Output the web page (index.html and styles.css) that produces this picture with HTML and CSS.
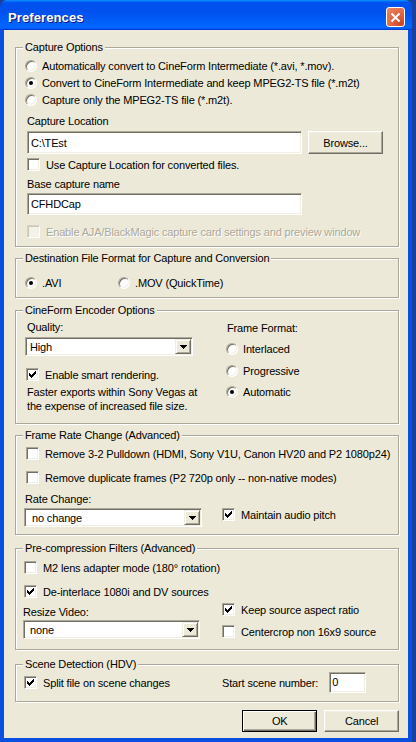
FILE: index.html
```html
<!DOCTYPE html>
<html>
<head>
<meta charset="utf-8">
<title>Preferences</title>
<link rel="stylesheet" href="styles.css">
</head>
<body>
<svg class="sprite" width="0" height="0">
  <symbol id="chk" viewBox="0 0 7 7"><path d="M6 0h1v1h-1z M5 1h2v1h-2z M0 2h1v1h-1z M4 2h3v1h-3z M0 3h2v1h-2z M3 3h3v1h-3z M0 4h5v1h-5z M1 5h3v1h-3z M2 6h1v1h-1z"/></symbol>
  <symbol id="down" viewBox="0 0 7 4"><path d="M0 0h7v1h-7z M1 1h5v1h-5z M2 2h3v1h-3z M3 3h1v1h-1z"/></symbol>
</svg>
<div class="window">
  <div class="titlebar">
    <span class="title">Preferences</span>
    <span class="close"><svg width="11" height="11" viewBox="0 0 11 11"><path d="M1.5 1.5l8 8M9.5 1.5l-8 8" stroke="#fff" stroke-width="2"/></svg></span>
  </div>
  <div class="frame">
    <div class="client">

      <section class="group g-capture">
        <div class="legend">Capture Options</div>
        <div class="row mt3 ml1"><span class="radio"></span>Automatically convert to CineForm Intermediate (*.avi, *.mov).</div>
        <div class="row ml1"><span class="radio"><i class="dot"></i></span>Convert to CineForm Intermediate and keep MPEG2-TS file (*.m2t)</div>
        <div class="row ml1"><span class="radio"></span>Capture only the MPEG2-TS file (*.m2t).</div>
        <div class="lbl mt5 ml3">Capture Location</div>
        <div class="field-row mt2 ml3">
          <div class="input path">C:\TEst</div>
          <div class="btn">Browse...</div>
        </div>
        <div class="row mt2 ml3"><span class="cb"></span>Use Capture Location for converted files.</div>
        <div class="lbl mt3 ml3">Base capture name</div>
        <div class="input path name mt1 ml3">CFHDCap</div>
        <div class="row mt8 ml3 disabled"><span class="cb"></span>Enable AJA/BlackMagic capture card settings and preview window</div>
      </section>

      <section class="group g-dest">
        <div class="legend">Destination File Format for Capture and Conversion</div>
        <div class="row-set mt9 ml1">
          <div class="row fmt-avi"><span class="radio"><i class="dot"></i></span>.AVI</div>
          <div class="row"><span class="radio"></span>.MOV (QuickTime)</div>
        </div>
      </section>

      <section class="group g-enc">
        <div class="legend">CineForm Encoder Options</div>
        <div class="cols">
          <div class="col-left enc-left">
            <div class="lbl mt2 ml3">Quality:</div>
            <div class="select q-select mt2 ml1"><span class="val">High</span><span class="arrow"><svg width="7" height="4"><use href="#down"/></svg></span></div>
            <div class="row mt10 ml2"><span class="cb"><svg width="7" height="7"><use href="#chk"/></svg></span>Enable smart rendering.</div>
            <p class="note mt2 ml3">Faster exports within Sony Vegas at<br>the expense of increased file size.</p>
          </div>
          <div class="col-right">
            <div class="lbl mt3 ml1">Frame Format:</div>
            <div class="row mt4"><span class="radio"></span>Interlaced</div>
            <div class="row mt5"><span class="radio"></span>Progressive</div>
            <div class="row mt4"><span class="radio"><i class="dot"></i></span>Automatic</div>
          </div>
        </div>
      </section>

      <section class="group g-rate">
        <div class="legend">Frame Rate Change (Advanced)</div>
        <div class="row mt3 ml2"><span class="cb"></span>Remove 3-2 Pulldown (HDMI, Sony V1U, Canon HV20 and P2 1080p24)</div>
        <div class="row mt7 ml2"><span class="cb"></span>Remove duplicate frames (P2 720p only -- non-native modes)</div>
        <div class="cols">
          <div class="col-left rate-left">
            <div class="lbl mt5 ml1">Rate Change:</div>
            <div class="select r-select mt1"><span class="val">no change</span><span class="arrow"><svg width="7" height="4"><use href="#down"/></svg></span></div>
          </div>
          <div class="col-right">
            <div class="row mt20"><span class="cb"><svg width="7" height="7"><use href="#chk"/></svg></span>Maintain audio pitch</div>
          </div>
        </div>
      </section>

      <section class="group g-filter">
        <div class="legend">Pre-compression Filters (Advanced)</div>
        <div class="row mt4"><span class="cb"></span>M2 lens adapter mode (180° rotation)</div>
        <div class="row mt7"><span class="cb"><svg width="7" height="7"><use href="#chk"/></svg></span>De-interlace 1080i and DV sources</div>
        <div class="cols">
          <div class="col-left filter-left">
            <div class="lbl mt4">Resize Video:</div>
            <div class="select f-select"><span class="val">none</span><span class="arrow"><svg width="7" height="4"><use href="#down"/></svg></span></div>
          </div>
          <div class="col-right">
            <div class="row mt1"><span class="cb"><svg width="7" height="7"><use href="#chk"/></svg></span>Keep source aspect ratio</div>
            <div class="row mt5"><span class="cb"></span>Centercrop non 16x9 source</div>
          </div>
        </div>
      </section>

      <section class="group g-scene">
        <div class="legend">Scene Detection (HDV)</div>
        <div class="cols scene-row mt1">
          <div class="col-left scene-left">
            <div class="row"><span class="cb"><svg width="7" height="7"><use href="#chk"/></svg></span>Split file on scene changes</div>
          </div>
          <span class="scene-label">Start scene number:</span>
          <div class="input scene-input">0</div>
        </div>
      </section>

      <div class="buttons">
        <div class="btn default">OK</div>
        <div class="btn">Cancel</div>
      </div>

    </div>
  </div>
</div>
</body>
</html>
```

FILE: styles.css
```css
* { box-sizing: border-box; }
html, body { margin: 0; padding: 0; }
body {
  width: 416px;
  height: 742px;
  overflow: hidden;
  background: #1a3f9c;
  font-family: "Liberation Sans", Arial, sans-serif;
  font-size: 11px;
  letter-spacing: -0.15px;
  color: #000;
}
.sprite { position: absolute; width: 0; height: 0; }

.window {
  width: 412px;
  height: 742px;
  display: flex;
  flex-direction: column;
}

.titlebar {
  flex: none;
  height: 30px;
  padding: 4px 7px 0 8px;
  display: flex;
  align-items: center;
  justify-content: space-between;
  border-radius: 7px 7px 0 0;
  background: linear-gradient(180deg, #0997ff, #0053ee 8%, #0050ee 40%, #0066ff 88%, #0066ff 93%, #005bff 95%, #003dd7 96%, #003dd7);
}
.title {
  color: #fff;
  font-weight: bold;
  font-size: 13px;
  letter-spacing: 0.1px;
  text-shadow: 1px 1px 0 #0a1883;
}
.close {
  width: 19px;
  height: 20px;
  border: 1px solid #fff;
  border-radius: 3px;
  display: flex;
  align-items: center;
  justify-content: center;
  background: radial-gradient(circle at 85% 85%, #cc4622 0%, #e0603a 40%, #ee8a6a 100%);
}

.frame {
  flex: 1;
  display: flex;
  border-style: solid;
  border-color: #0a4fe0;
  border-width: 0 5px 4px 4px;
}
.client {
  flex: 1;
  background: #ece9d8;
  padding: 17px 9px 0 11px;
}

/* group boxes */
.group {
  border: 1px solid #aca899;
  box-shadow: 1px 1px 0 #fff, inset 1px 1px 0 #fff;
  padding: 0 8px 6px 8px;
}
.legend {
  display: table;
  height: 14px;
  line-height: 14px;
  margin: -8px 0 0 -1px;
  padding: 0 2px;
  background: #ece9d8;
}
.g-dest { margin-top: 11px; }
.g-enc { margin-top: 12px; padding-bottom: 10px; }
.g-rate { margin-top: 11px; padding-bottom: 7px; }
.g-filter { margin-top: 13px; padding-bottom: 9px; }
.g-scene { margin-top: 14px; padding-bottom: 8px; }

/* spacing helpers */
.mt1 { margin-top: 1px; }
.mt2 { margin-top: 2px; }
.mt3 { margin-top: 3px; }
.mt4 { margin-top: 4px; }
.mt5 { margin-top: 5px; }
.mt7 { margin-top: 7px; }
.mt8 { margin-top: 8px; }
.mt9 { margin-top: 9px; }
.mt10 { margin-top: 10px; }
.mt20 { margin-top: 20px; }
.ml1 { margin-left: 1px; }
.ml2 { margin-left: 2px; }
.ml3 { margin-left: 3px; }

/* rows */
.row {
  display: flex;
  align-items: center;
  height: 17px;
  white-space: nowrap;
}
.row-set { display: flex; }
.fmt-avi { width: 93px; }
.lbl {
  height: 16px;
  line-height: 16px;
  white-space: nowrap;
}
.note {
  margin-bottom: 0;
  line-height: 14px;
}
.disabled {
  color: #aca899;
  text-shadow: 1px 1px 0 #fff;
}

.cols { display: flex; }
.enc-left { width: 202px; }
.rate-left { width: 198px; }
.filter-left { width: 199px; margin-left: -1px; }
.scene-left { width: 198px; }

/* radio */
.radio {
  flex: none;
  width: 12px;
  height: 12px;
  margin-right: 5px;
  border-radius: 50%;
  border: 1px solid;
  border-color: #aca899 #fff #fff #aca899;
  background: #fff;
  box-shadow: inset 1px 1px 0 #716f64, inset -1px -1px 0 #f1efe2;
  display: flex;
  align-items: center;
  justify-content: center;
}
.dot {
  width: 4px;
  height: 4px;
  border-radius: 50%;
  background: #000;
}

/* checkbox */
.cb {
  flex: none;
  width: 13px;
  height: 13px;
  margin-right: 6px;
  border: 1px solid;
  border-color: #aca899 #fff #fff #aca899;
  background: #fff;
  box-shadow: inset 1px 1px 0 #716f64, inset -1px -1px 0 #f1efe2;
  display: flex;
  align-items: center;
  justify-content: center;
}
.cb svg { fill: #000; }
.disabled .cb {
  border-color: #d6d3c6 #fff #fff #d6d3c6;
  background: #f3f1e8;
  box-shadow: inset 1px 1px 0 #c9c6b6;
}

/* text inputs */
.input {
  height: 23px;
  background: #fff;
  border: 1px solid;
  border-color: #aca899 #fff #fff #aca899;
  box-shadow: inset 1px 1px 0 #716f64, inset -1px -1px 0 #f1efe2;
  padding: 0 3px;
  display: flex;
  align-items: center;
  white-space: nowrap;
}
.field-row {
  display: flex;
  gap: 6px;
}
.path { width: 275px; }
.name { height: 22px; }

/* buttons */
.btn {
  flex: none;
  width: 75px;
  height: 23px;
  background: #ece9d8;
  border: 1px solid;
  border-color: #fff #716f64 #716f64 #fff;
  box-shadow: inset -1px -1px 0 #aca899, inset 1px 1px 0 #f1efe2;
  display: flex;
  align-items: center;
  justify-content: center;
}
.btn.default {
  border-color: #000;
  box-shadow: inset 1px 1px 0 #fff, inset -1px -1px 0 #716f64, inset -2px -2px 0 #aca899;
}
.buttons {
  display: flex;
  justify-content: flex-end;
  gap: 7px;
  margin-top: 8px;
}
.buttons .btn { height: 22px; }

/* combo boxes */
.select {
  height: 19px;
  display: flex;
  align-items: stretch;
  background: #fff;
  border: 1px solid;
  border-color: #aca899 #fff #fff #aca899;
  box-shadow: inset 1px 1px 0 #716f64, inset -1px -1px 0 #f1efe2;
  padding: 1px;
}
.select .val {
  flex: 1;
  padding-left: 3px;
  display: flex;
  align-items: center;
}
.select .arrow {
  width: 16px;
  background: #ece9d8;
  border: 1px solid;
  border-color: #f1efe2 #716f64 #716f64 #f1efe2;
  box-shadow: inset 1px 1px 0 #fff, inset -1px -1px 0 #aca899;
  display: flex;
  align-items: center;
  justify-content: center;
}
.select .arrow svg { fill: #000; }
.q-select { width: 168px; }
.r-select { width: 178px; }
.r-select .val { padding-left: 6px; }
.f-select { width: 177px; }
.f-select .val { padding-left: 5px; }

/* scene row */
.scene-row { align-items: center; }
.scene-label { white-space: nowrap; }
.scene-input {
  width: 37px;
  height: 21px;
  margin-left: 11px;
  padding-left: 2px;
  align-items: flex-start;
  padding-top: 3px;
}
```
